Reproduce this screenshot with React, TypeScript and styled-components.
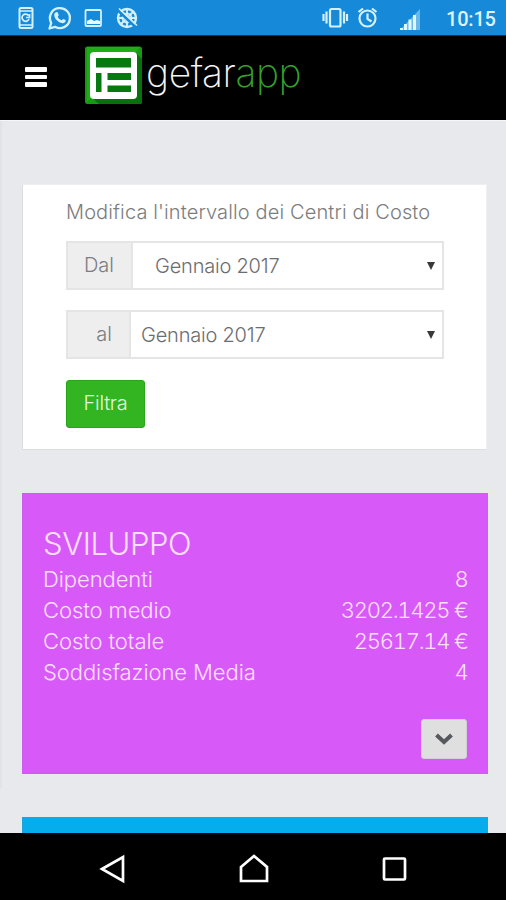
import React from 'react';
import styled, { createGlobalStyle } from 'styled-components';

const Global = createGlobalStyle`
  *, *::before, *::after { box-sizing: border-box; }
  body { margin: 0; background: #000; }
  button { font: inherit; border: 0; padding: 0; margin: 0; }
`;

const Screen = styled.div`
  width: 506px;
  height: 900px;
  display: flex;
  flex-direction: column;
  overflow: hidden;
  font-family: Inter, "Liberation Sans", sans-serif;
  font-weight: 300;
`;

const StatusBar = styled.div`
  flex: 0 0 36px;
  min-height: 0;
  display: flex;
  align-items: flex-start;
  justify-content: space-between;
  background: #168ad8;
  border-bottom: 1px solid #06345c;
`;

const StatusIcons = styled.svg`
  display: block;
`;

const Clock = styled.span`
  width: 72px;
  height: 35px;
  padding-left: 12px;
  font: 500 20px/38px Roboto, sans-serif;
  letter-spacing: -0.2px;
  color: #def3fd;
  white-space: nowrap;
`;

const StatusRight = styled.div`
  display: flex;
  height: 35px;
`;

const Header = styled.header`
  flex: 0 0 84px;
  display: flex;
  align-items: flex-start;
  background: #000;
`;

const MenuButton = styled.button`
  display: flex;
  flex-direction: column;
  gap: 3px;
  width: 22px;
  margin: 31px 38px 0 25px;
  background: transparent;
`;

const MenuLine = styled.span`
  height: 4.6px;
  border-radius: 1px;
  background: #fff;
`;

const Mark = styled.svg`
  display: block;
  margin-top: 10px;
`;

const Wordmark = styled.span`
  margin: 13px 0 0 4px;
  font-size: 39px;
  font-weight: 200;
  line-height: 48px;
  letter-spacing: -0.45px;
  color: #f4f4f4;
`;

const WordmarkAccent = styled.span`
  color: #35a02b;
`;

const Content = styled.main`
  flex: 1 1 0;
  min-height: 0;
  overflow: hidden;
  background: #e7e9ec;
  border-top: 1px solid #f6f6f8;
`;

const Page = styled.div`
  padding: 63px 19px 0 20px;
  height: 667px;
  border-left: 2px solid #e1e3e7;
`;

const FilterPanel = styled.form`
  height: 266px;
  margin: 0 0 43px;
  padding: 14px 42px 0 43px;
  background: #fff;
  border: 1px solid #dddee2;
  border-right-color: #f0f0f2;
  border-top-color: #eeeef1;
  color: #7b7d80;
`;

const FilterTitle = styled.div`
  height: 42px;
  font-size: 20px;
  line-height: 26px;
  letter-spacing: 0.13px;
  white-space: nowrap;
`;

const Field = styled.div`
  display: flex;
  width: 378px;
  height: 49px;
  margin-bottom: 20px;
  border: 2px solid #e5e5e5;
`;

const FieldLabel = styled.label<{ $width: number }>`
  width: ${({ $width }) => $width}px;
  padding-right: 17px;
  border-right: 2px solid #e5e5e5;
  background: #eee;
  font-size: 20px;
  line-height: 44px;
  text-align: right;
`;

const FieldValue = styled.div<{ $indent: number }>`
  flex: 1;
  display: flex;
  align-items: center;
  justify-content: space-between;
  padding: 1px 7px 0 ${({ $indent }) => $indent}px;
  font-size: 20px;
  letter-spacing: -0.2px;
  line-height: 44px;
  color: #6c6d70;
`;

const Caret = styled.svg`
  display: block;
  margin-top: -1px;
`;

const FilterButton = styled.button`
  display: block;
  width: 79px;
  height: 48px;
  margin-top: 21px;
  padding-bottom: 3px;
  border-radius: 3px;
  border: 1px solid #27a51b;
  background: #32b520;
  color: #e4f8df;
  font-size: 20px;
  line-height: 42px;
  letter-spacing: -0.3px;
`;

const CostCard = styled.section`
  display: flex;
  flex-direction: column;
  width: 466px;
  height: 281px;
  padding: 32px 20px 0 20px;
  background: #d75af8;
  border: 1px solid #cc5eeb;
  color: #fce0ff;
`;

const CardTitle = styled.h2`
  margin: 0;
  height: 38px;
  font-size: 31px;
  font-weight: 300;
  line-height: 35px;
  letter-spacing: -0.4px;
`;

const Stat = styled.div`
  display: flex;
  justify-content: space-between;
  height: 31px;
  font-size: 22px;
  line-height: 31px;
  letter-spacing: -0.08px;
`;

const StatValue = styled.span`
  font-variant-numeric: tabular-nums;
  letter-spacing: -1.25px;
  margin-right: -0.5px;
`;

const ExpandButton = styled.button`
  align-self: flex-end;
  display: flex;
  align-items: center;
  justify-content: center;
  width: 46px;
  height: 40px;
  margin-top: 31px;
  border-radius: 3px;
  background: #dfdfe0;
  border: 1px solid #d4cfd7;
`;

const NextCard = styled.section`
  width: 466px;
  height: 60px;
  margin: 29px 0 0 22px;
  background: #06adec;
  border: 1px solid #22a3da;
`;

const NavBar = styled.nav`
  flex: 0 0 67px;
  display: flex;
  justify-content: space-between;
  padding: 20px 96px 0 98px;
  background: #000;
`;

const NavIcon = styled.svg`
  display: block;
  fill: none;
  stroke: #fff;
  stroke-width: 2.7;
  stroke-linejoin: miter;
`;

const stats = [
  ['Dipendenti', '8'],
  ['Costo medio', '3202.1425 €'],
  ['Costo totale', '25617.14 €'],
  ['Soddisfazione Media', '4'],
];

function NotificationIcons() {
  return (
    <StatusIcons width="150" height="35" fill="none" stroke="#d4f1fb" strokeWidth="2">
      <rect x="19.5" y="8" width="13" height="20" rx="1.5" />
      <path d="M20 11H32M20 25H32" strokeWidth="1.5" />
      <path d="M28.500 15.500a3.600 3.600 0 1 0 .5 3.500M29.500 14v3.500h-3.500" strokeWidth="1.700" />
      <path d="M49.500 28.500L51.200 23A10 10 0 1 1 55 26.800Z" strokeWidth="2.3" strokeLinejoin="round" />
      <path d="M55.500 12.500c1.300-1 2-.6 2.600.9l.6 1.500c.2.600-.8 1.300-1 1.800.8 1.900 2.200 3 4 3.600.6-.5 1.200-1.600 1.700-1.400l2.200 1.200c.6 1.900-1.400 3.200-3 3.100-4.600-.8-8-4.100-8.400-8.200 0-1 .5-2 1.300-2.500Z" fill="#d4f1fb" stroke="none" />
      <rect x="85.500" y="10" width="15.500" height="16" rx="1" strokeWidth="1.800" />
      <path d="M87 24v-3l4-2 3 2 3-1 3 1v3Z" fill="#e6faff" stroke="none" />
      <circle cx="127" cy="18" r="9" strokeWidth="2.400" />
      <circle cx="127" cy="18" r="4.500" strokeWidth="1.900" />
      <path d="M127 9v18M118 18h18M121 12l12 12M133 12l-12 12" strokeWidth="1.900" />
      <path d="M117 9.500L136 27.500" stroke="#168ad8" strokeWidth="2.600" />
      <path d="M119 8.500L137 25.500" strokeWidth="1.600" />
    </StatusIcons>
  );
}

function SystemIcons() {
  return (
    <StatusIcons width="124" height="35" fill="none" stroke="#d4f1fb" strokeWidth="2.200">
      <rect x="20" y="9" width="10.500" height="17.500" rx="1.500" />
      <path d="M16.500 11.500v12M34 11.500v12M13.500 14v7M37 14v7" />
      <circle cx="57.500" cy="18.500" r="8" />
      <path d="M57.500 13.500v5.500l4 2.500M48.500 12l4.500-3.500M66.500 12L62 8.500" />
      <path d="M90 30L110 9V30Z" fill="#68b9e8" stroke="none" />
      <path d="M91.500 30v-2M95.500 30v-6M100 30V19.500M104.500 30V15" stroke="#e1f7ff" strokeWidth="3" />
    </StatusIcons>
  );
}

function LogoMark() {
  return (
    <Mark width="57" height="58">
      <rect x="0" y="0.500" width="57" height="57.500" rx="2.500" fill="#159b12" />
      <path d="M51 7L57 13V55.500Q57 58 54.500 58H14L6 51Z" fill="#08700c" />
      <path d="M2 1H55L51 6H6V52L2 56Z" fill="#20ac17" />
      <rect x="5" y="6" width="47" height="47" rx="4" fill="#fff" />
      <path d="M11 12H46V21.500H11ZM11 27H16.500V46H11ZM22.500 27H46V34H22.500ZM22.500 39.500H46V46H22.500Z" fill="#087811" />
    </Mark>
  );
}

function MonthField({ label, labelWidth, indent }: { label: string; labelWidth: number; indent: number }) {
  return (
    <Field>
      <FieldLabel $width={labelWidth}>{label}</FieldLabel>
      <FieldValue $indent={indent}>
        Gennaio 2017
        <Caret width="8" height="8"><path d="M0 0H8L4 8Z" fill="#37383a" /></Caret>
      </FieldValue>
    </Field>
  );
}

export default function App() {
  return (
    <>
      <Global />
      <Screen>
        <StatusBar>
          <NotificationIcons />
          <StatusRight>
            <SystemIcons />
            <Clock>10:15</Clock>
          </StatusRight>
        </StatusBar>
        <Header>
          <MenuButton aria-label="Menu"><MenuLine /><MenuLine /><MenuLine /></MenuButton>
          <LogoMark />
          <Wordmark>gefar<WordmarkAccent>app</WordmarkAccent></Wordmark>
        </Header>
        <Content>
          <Page>
            <FilterPanel>
              <FilterTitle>Modifica l'intervallo dei Centri di Costo</FilterTitle>
              <MonthField label="Dal" labelWidth={65} indent={22} />
              <MonthField label="al" labelWidth={63} indent={10} />
              <FilterButton type="button">Filtra</FilterButton>
            </FilterPanel>
            <CostCard>
              <CardTitle>SVILUPPO</CardTitle>
              {stats.map(([name, value]) => (
                <Stat key={name}><span>{name}</span><StatValue>{value}</StatValue></Stat>
              ))}
              <ExpandButton aria-label="Espandi">
                <svg width="18" height="12" fill="none" stroke="#55595d" strokeWidth="4">
                  <path d="M1.500 2L9 9L16.500 2" />
                </svg>
              </ExpandButton>
            </CostCard>
          </Page>
          <NextCard />
        </Content>
        <NavBar>
          <NavIcon width="30" height="32"><path d="M4 16L25 4V28Z" /></NavIcon>
          <NavIcon width="32" height="32"><path d="M3 14L16 3L29 14V28H3Z" /></NavIcon>
          <NavIcon width="30" height="32"><rect x="4" y="5.500" width="21" height="21" rx="1" /></NavIcon>
        </NavBar>
      </Screen>
    </>
  );
}
